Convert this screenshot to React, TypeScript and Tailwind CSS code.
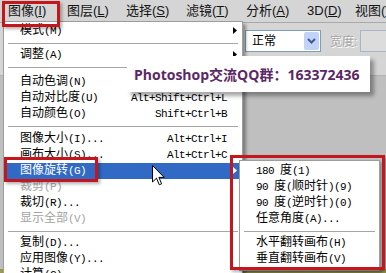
import React from 'react';

const CJK = /([\u2E80-\u9FFF\uFF00-\uFFEF]+)/;

// CJK runs at 12px, latin in a 6px-wide mono (like SimSun's ascii)
function Txt({ s }: { s: string }) {
  const parts = s.split(CJK);
  return (
    <>
      {parts.map((p, i) =>
        CJK.test(p) ? (
          <span key={i} className="text-[12px] tracking-normal">{p}</span>
        ) : (
          <span key={i}>{p}</span>
        )
      )}
    </>
  );
}

type RowProps = {
  label: string;
  keys?: string;
  arrow?: boolean;
  disabled?: boolean;
  active?: boolean;
};

function Row({ label, keys, arrow, disabled, active }: RowProps) {
  const tone = active ? 'bg-[#316ac5] text-white' : disabled ? 'text-[#a3a3a3]' : 'text-black';
  return (
    <div className={`relative flex h-4 items-center whitespace-pre pl-4 pr-[15px] leading-4 ${tone}`}>
      <Txt s={label} />
      {keys && <span className="ml-auto">{keys}</span>}
      {arrow && (
        <svg className="absolute right-[5px] top-[4px]" width="4" height="7" viewBox="0 0 4 7">
          <path d="M0 0L4 3.5L0 7Z" fill="currentColor" />
        </svg>
      )}
    </div>
  );
}

function Sep({ h }: { h: string }) {
  return (
    <div className={`${h} px-[4px] pt-[4px]`}>
      <div className="h-px bg-[#a6a6a6]" />
    </div>
  );
}

const menuFont = "font-['Liberation_Mono','Noto_Sans_CJK_SC',monospace] text-[11px] tracking-[-0.6px]";

const topMenus = [
  { t: '图像', k: 'I', w: 'w-[59px]' },
  { t: '图层', k: 'L', w: 'w-[59px]' },
  { t: '选择', k: 'S', w: 'w-[60px]' },
  { t: '滤镜', k: 'T', w: 'w-[60px]' },
  { t: '分析', k: 'A', w: 'w-[61px]' },
  { t: '3D', k: 'D', w: 'w-[48px]' },
  { t: '视图', k: 'V', w: 'w-[40px]' },
];

export default function App() {
  return (
    <div className="relative h-[273px] w-[386px] overflow-hidden bg-[#bfbfbf] font-['Liberation_Sans','Noto_Sans_CJK_SC',sans-serif]">
      {/* menu bar */}
      <div className="flex h-[23px] items-center whitespace-nowrap border-b border-[#a9a9a9] bg-[#d5d5d5] pl-[8px] text-[13px] text-[#141414]">
        {topMenus.map((m) => (
          <div key={m.t} className={`${m.w} shrink-0`}>
            {m.t}(<span className="underline">{m.k}</span>)
          </div>
        ))}
      </div>

      {/* options bar */}
      <div className="flex h-[53px] items-start border-b border-[#b3b3b3] bg-[#d5d5d5] pt-[7px]">
        <div className="ml-[245px] flex h-[22px] w-[76px] shrink-0 items-center border border-[#7f9db9] bg-white pl-[6px]">
          <span className="text-[12px] text-black">正常</span>
          <div className="ml-auto mr-px flex h-[18px] w-[15px] items-center justify-center rounded-[2px] bg-[#c3d3f7]">
            <svg width="9" height="6" viewBox="0 0 9 6">
              <path d="M1 1L4.5 4.5L8 1" fill="none" stroke="#3b5c94" strokeWidth="2" />
            </svg>
          </div>
        </div>
        <span className="ml-[9px] mt-[3px] shrink-0 text-[12px] text-[#a6a6a6] [text-shadow:1px_1px_0_#fff]">宽度:</span>
        <div className="ml-[3px] h-[22px] w-[40px] shrink-0 border border-[#a7b5c9] bg-[#dcdcdc]" />
      </div>

      {/* bottom strip of the work area */}
      <div className="absolute bottom-0 left-0 h-[4px] w-full bg-[#9d9a4f]" />

      {/* image menu */}
      <div className={`absolute left-[3px] top-[21px] w-[240px] border border-[#9d9d9d] bg-white pt-px shadow-[3px_3px_3px_rgba(0,0,0,0.35)] ${menuFont}`}>
        <Row label="模式(M)" arrow />
        <Sep h="h-[8px]" />
        <Row label="调整(A)" arrow />
        <Sep h="h-[11px]" />
        <Row label="自动色调(N)" />
        <Row label="自动对比度(U)" keys="Alt+Shift+Ctrl+L" />
        <Row label="自动颜色(O)" keys="Shift+Ctrl+B" />
        <Sep h="h-[9px]" />
        <Row label="图像大小(I)..." keys="Alt+Ctrl+I" />
        <Row label="画布大小(S)..." keys="Alt+Ctrl+C" />
        <Row label="图像旋转(G)" arrow active />
        <Row label="裁剪(P)" disabled />
        <Row label="裁切(R)..." />
        <Row label="显示全部(V)" disabled />
        <Sep h="h-[8px]" />
        <Row label="复制(D)..." />
        <Row label="应用图像(Y)..." />
        <Row label="计算(C)..." />
      </div>

      {/* rotate submenu */}
      <div className={`absolute left-[239px] top-[160px] w-[141px] border border-[#9d9d9d] bg-white pb-[3px] pt-[2px] shadow-[2px_2px_3px_rgba(0,0,0,0.3)] ${menuFont}`}>
        <Row label="180 度(1)" />
        <Row label="90 度(顺时针)(9)" />
        <Row label="90 度(逆时针)(0)" />
        <Row label="任意角度(A)..." />
        <Sep h="h-[8px]" />
        <Row label="水平翻转画布(H)" />
        <Row label="垂直翻转画布(V)" />
      </div>

      {/* watermark */}
      <div className="absolute left-[127px] top-[56px] flex h-[36px] w-[243px] items-center bg-white pl-[7px] shadow-[4px_4px_4px_rgba(0,0,0,0.35)]">
        <span className="whitespace-nowrap font-['Open_Sans','Noto_Sans_CJK_SC',sans-serif] text-[14px] font-bold text-[#5a2866]">
          Photoshop交流QQ群：163372436
        </span>
      </div>

      {/* annotation boxes */}
      <div className="absolute left-[2px] top-[1px] h-[26px] w-[58px] border-[3px] border-[#c5161d] shadow-[2px_2px_3px_rgba(0,0,0,0.3)]" />
      <div className="absolute left-[4px] top-[157px] h-[25px] w-[94px] border-[3px] border-[#c5161d] shadow-[2px_2px_3px_rgba(0,0,0,0.3)]" />
      <div className="absolute left-[230px] top-[155px] h-[115px] w-[155px] border-[3px] border-[#c5161d] shadow-[2px_2px_3px_rgba(0,0,0,0.3)]" />

      {/* mouse pointer */}
      <svg className="absolute left-[152px] top-[165px]" width="13" height="21" viewBox="0 0 13 21">
        <path d="M0.5 0.5V17L4.5 13.2L7.3 19.8L9.6 18.8L6.9 12.4H12.2Z" fill="#fff" stroke="#000" />
      </svg>
    </div>
  );
}
